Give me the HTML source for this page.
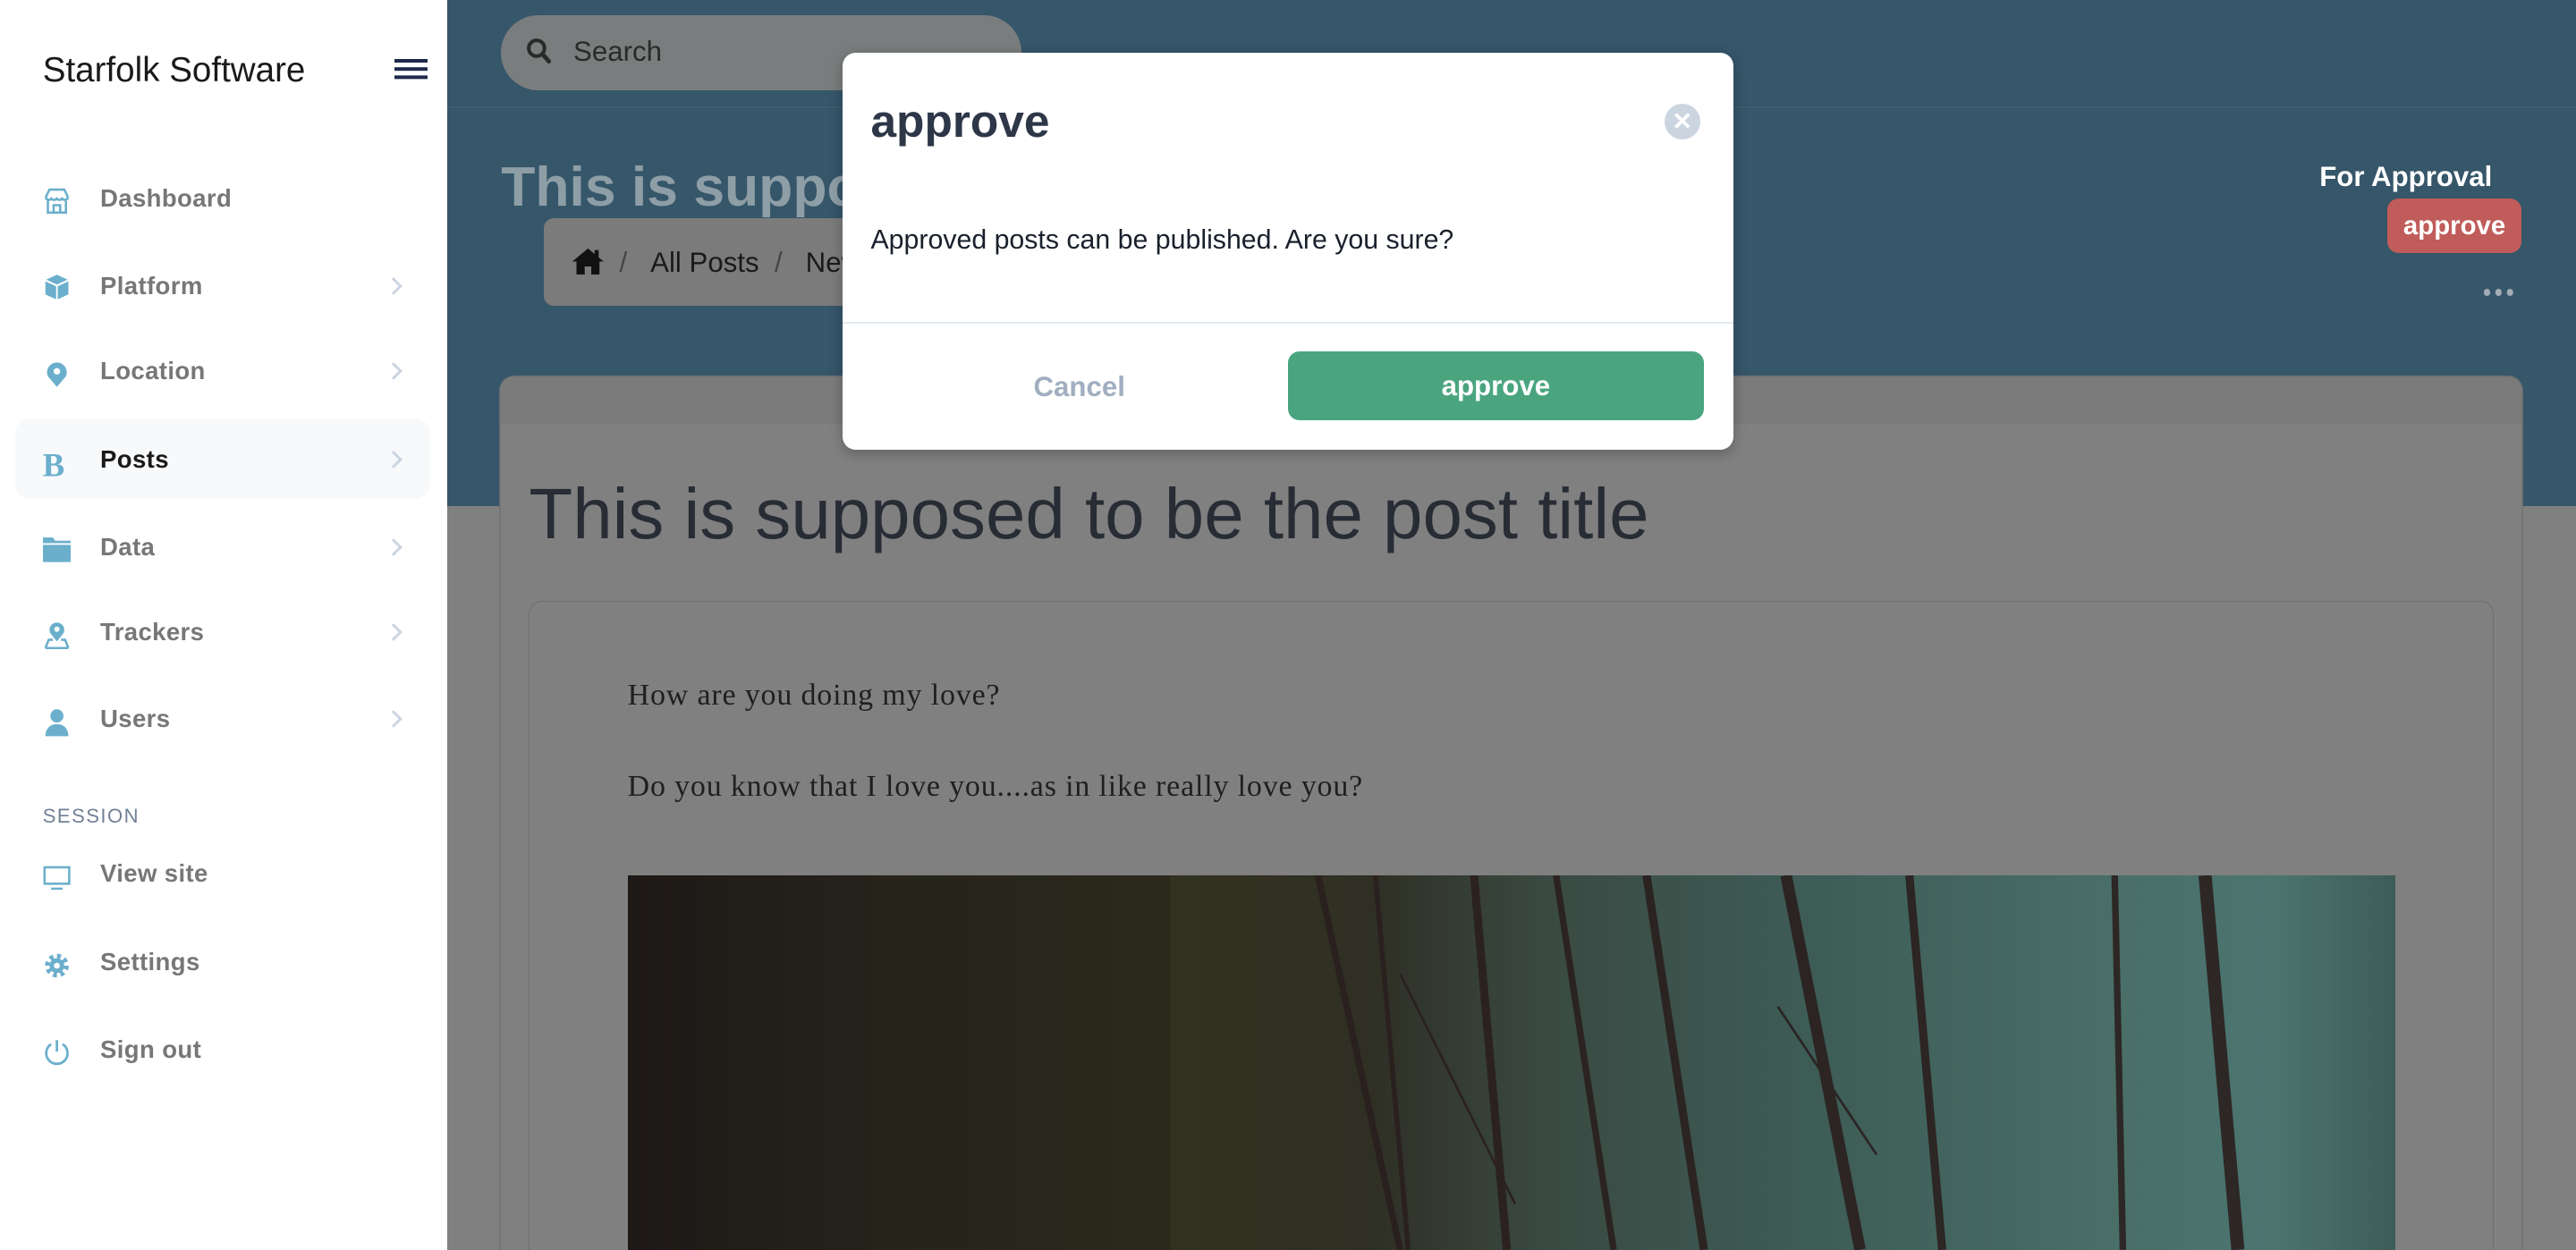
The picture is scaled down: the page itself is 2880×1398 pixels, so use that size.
<!DOCTYPE html>
<html><head><meta charset="utf-8"><style>
html,body{margin:0;padding:0;width:2880px;height:1398px;overflow:hidden;background:#808080}
#r{zoom:1.836735;width:1568px;height:761px;position:relative;overflow:hidden;font-family:"Liberation Sans",sans-serif}
.a{position:absolute}
.side{left:0;top:0;width:272px;height:761px;background:#fff}
.mi{position:absolute;left:61px;font-size:15px;color:#777;font-weight:bold;transform:translateY(-50%);letter-spacing:.2px}
.ic{position:absolute;left:26px;width:17px;height:17px;transform:translateY(-50%)}
.ch{position:absolute;left:236px;width:6px;height:6px;border-right:2px solid #cbd5e0;border-top:2px solid #cbd5e0;transform:translateY(-50%) rotate(45deg)}
</style></head><body><div id="r">
<!-- main -->
<div class="a" style="left:272px;top:0;width:1296px;height:308px;background:#36566a"></div>
<div class="a" style="left:272px;top:65px;width:1296px;height:1px;background:#3d5e70"></div>
<div class="a" style="left:305px;top:9px;width:317px;height:46px;border-radius:23px;background:#7a7d7d"></div>
<svg class="a" style="left:320px;top:23px" width="16" height="17" viewBox="0 0 16 17"><circle cx="6.5" cy="6.5" r="4.8" fill="none" stroke="#2a2a2a" stroke-width="2.2"/><path d="M10 10l4 4.5" stroke="#2a2a2a" stroke-width="2.6" stroke-linecap="round"/></svg>
<div class="a" style="left:349px;top:22px;font-size:17px;color:#2a2a2a">Search</div>
<div class="a" style="left:305px;top:94px;font-size:34px;color:#8e9ea6;font-weight:bold;white-space:nowrap">This is supposed to be the post title</div>
<div class="a" style="left:331px;top:133px;width:400px;height:53px;border-radius:6px;background:#7b7b7b"></div>
<svg class="a" style="left:348px;top:150px" width="20" height="17" viewBox="0 0 20 17"><path d="M10 1L0.5 9h2.5v8h5v-5h4v5h5V9h2.5z" fill="#111"/><rect x="14" y="2" width="2.5" height="5" fill="#111"/></svg>
<div class="a" style="left:377px;top:150px;font-size:17px;color:#1a1a1a;white-space:nowrap"><span style="color:#444">/</span>&nbsp;&nbsp;&nbsp;All Posts&nbsp;&nbsp;<span style="color:#444">/</span>&nbsp;&nbsp;&nbsp;New post</div>
<div class="a" style="right:51px;top:98px;font-size:17px;color:#fff;font-weight:bold">For Approval</div>
<div class="a" style="left:1453px;top:121px;width:82px;height:33px;border-radius:7px;background:#c05c5a;color:#fff;font-weight:bold;font-size:16px;line-height:34px;text-align:center">approve</div>
<div class="a" style="left:1512px;top:176px;width:4px;height:4px;border-radius:50%;background:#a3acb6;box-shadow:7px 0 #a3acb6,14px 0 #a3acb6"></div>
<!-- card -->
<div class="a" style="left:305px;top:230px;width:1230px;height:560px;border-radius:8px;background:#808080;box-shadow:0 0 0 1px #747474;overflow:hidden">
 <div style="height:28px;background:#7b7b7b"></div>
</div>
<div class="a" style="left:322px;top:288px;font-size:43.5px;color:#272c35;white-space:nowrap">This is supposed to be the post title</div>
<div class="a" style="left:322px;top:366px;width:1195px;height:420px;border:1px solid #6e6e6e;border-radius:8px"></div>
<div class="a" style="left:382px;top:413px;font-family:'Liberation Serif',serif;font-size:18.5px;letter-spacing:.45px;color:#1f1f1f">How are you doing my love?</div>
<div class="a" style="left:382px;top:469px;font-family:'Liberation Serif',serif;font-size:18.5px;letter-spacing:.45px;color:#1f1f1f">Do you know that I love you....as in like really love you?</div>
<div class="a" style="left:382px;top:533px;width:1076px;height:228px;background:linear-gradient(90deg,#1f1a18 0%,#2b2a1f 15%,#33321f 30%,#2f2f24 42%,#3a4a42 52%,#3d5a54 65%,#4a6f69 85%,#4c7570 93%,#3e5c58 100%);overflow:hidden">
<svg width="1076" height="228" style="position:absolute;left:0;top:0"><g stroke="#2a1f1e" fill="none" opacity=".9">
<path d="M420 0L470 228" stroke-width="4"/><path d="M455 0L475 228" stroke-width="3"/><path d="M515 0L535 228" stroke-width="5"/><path d="M565 0L600 228" stroke-width="4"/><path d="M620 0L655 228" stroke-width="5"/><path d="M705 0L750 228" stroke-width="7"/><path d="M780 0L800 228" stroke-width="5"/><path d="M905 0L910 228" stroke-width="4"/><path d="M960 0L980 228" stroke-width="8"/><path d="M470 60L540 200" stroke-width="1.5"/><path d="M700 80L760 170" stroke-width="1.5"/></g>
<rect x="0" y="0" width="330" height="228" fill="#1a1614" opacity=".3"/></svg></div>
<!-- modal -->
<div class="a" style="left:513px;top:32px;width:542px;height:242px;background:#fff;border-radius:8px;box-shadow:0 2px 8px rgba(0,0,0,.25)"></div>
<div class="a" style="left:530px;top:57px;font-size:28px;color:#2d3748;font-weight:bold">approve</div>
<div class="a" style="left:1013px;top:63px;width:22px;height:22px;border-radius:50%;background:#cbd5e0;color:#fff;font-size:15px;line-height:22px;text-align:center;font-weight:bold">✕</div>
<div class="a" style="left:530px;top:137px;font-size:16.5px;color:#1a202c">Approved posts can be published. Are you sure?</div>
<div class="a" style="left:513px;top:196px;width:542px;height:1px;background:#e2e8f0"></div>
<div class="a" style="left:597px;top:226px;width:120px;text-align:center;font-size:17px;color:#a0aec0;font-weight:bold">Cancel</div>
<div class="a" style="left:784px;top:214px;width:253px;height:42px;border-radius:7px;background:#4aa57f;color:#fff;font-weight:bold;font-size:17px;line-height:43px;text-align:center">approve</div>
<!-- sidebar -->
<div class="a side">
<div class="a" style="left:26px;top:31px;font-size:21px;color:#1a1a1a">Starfolk Software</div>
<div class="a" style="left:240px;top:36px;width:20px;height:2px;background:#1e2a4a;box-shadow:0 5px #1e2a4a,0 10px #1e2a4a"></div>
<div class="a" style="left:9px;top:255px;width:253px;height:49px;border-radius:9px;background:#f7f9fb"></div>
<svg class="ic" style="top:122px" viewBox="0 0 17 17"><path d="M2 6l2-4h9l2 4v1.5c-1 1-2.5 1-3.3 0-0.9 1-2.5 1-3.3 0-0.9 1-2.5 1-3.3 0-0.9 1-2.1 1-3.1 0z M3 9v7h11V9 M6.5 16v-4.5h4V16" fill="none" stroke="#6bafcc" stroke-width="1.4"/></svg>
<div class="mi" style="top:121px">Dashboard</div>
<svg class="ic" style="top:175px" viewBox="0 0 17 17"><path d="M8.5 1L15 4 8.5 7 2 4z M1.5 5l6.5 3v8l-6.5-3z M15.5 5L9 8v8l6.5-3z" fill="#6bafcc"/></svg>
<div class="mi" style="top:174px">Platform</div><div class="ch" style="top:174px"></div>
<svg class="ic" style="top:228px" viewBox="0 0 17 17"><path d="M8.5 16L3 9.5A6 6 0 1 1 14 9.5z" fill="#6bafcc"/><circle cx="8.5" cy="6.5" r="2" fill="#fff"/></svg>
<div class="mi" style="top:226px">Location</div><div class="ch" style="top:226px"></div>
<div class="ic" style="top:283px;font-family:'Liberation Serif',serif;font-weight:bold;font-size:20px;color:#6bafcc;line-height:17px">B</div>
<div class="mi" style="top:280px;color:#1a1a1a">Posts</div><div class="ch" style="top:280px"></div>
<svg class="ic" style="top:334px" viewBox="0 0 17 17"><path d="M0 2h6l1.5 2H17v13H0z" fill="#6bafcc"/><path d="M0 6h17" stroke="#fff" stroke-width="1"/></svg>
<div class="mi" style="top:333px">Data</div><div class="ch" style="top:333px"></div>
<svg class="ic" style="top:387px" viewBox="0 0 17 17"><path d="M8.5 12L4.5 7A4.5 4.5 0 1 1 12.5 7z" fill="#6bafcc"/><circle cx="8.5" cy="4.5" r="1.6" fill="#fff"/><path d="M1.5 16l2-5h2.5M15.5 16l-2-5H11M1.5 16h14" fill="none" stroke="#6bafcc" stroke-width="1.4"/></svg>
<div class="mi" style="top:385px">Trackers</div><div class="ch" style="top:385px"></div>
<svg class="ic" style="top:440px" viewBox="0 0 17 17"><circle cx="8.5" cy="4.5" r="4" fill="#6bafcc"/><path d="M1.5 17c0-5 3-7.5 7-7.5s7 2.5 7 7.5z" fill="#6bafcc"/></svg>
<div class="mi" style="top:438px">Users</div><div class="ch" style="top:438px"></div>
<div class="a" style="left:26px;top:490px;font-size:12px;color:#718096;letter-spacing:.8px">SESSION</div>
<svg class="ic" style="top:534px" viewBox="0 0 17 17"><rect x="1" y="2.5" width="15" height="10" fill="none" stroke="#6bafcc" stroke-width="1.4"/><path d="M5 15.5h7" stroke="#6bafcc" stroke-width="1.4"/></svg>
<div class="mi" style="top:532px">View site</div>
<svg class="ic" style="top:588px" viewBox="0 0 17 17"><circle cx="8.5" cy="8.5" r="5.5" fill="none" stroke="#6bafcc" stroke-width="3.5" stroke-dasharray="2.2 2.1"/><circle cx="8.5" cy="8.5" r="4.5" fill="#6bafcc"/><circle cx="8.5" cy="8.5" r="1.8" fill="#fff"/></svg>
<div class="mi" style="top:586px">Settings</div>
<svg class="ic" style="top:641px" viewBox="0 0 17 17"><path d="M5 3.5A6.5 6.5 0 1 0 12 3.5" fill="none" stroke="#6bafcc" stroke-width="1.5"/><path d="M8.5 1v7" stroke="#6bafcc" stroke-width="1.5"/></svg>
<div class="mi" style="top:639px">Sign out</div>
</div>
</div></body></html>
